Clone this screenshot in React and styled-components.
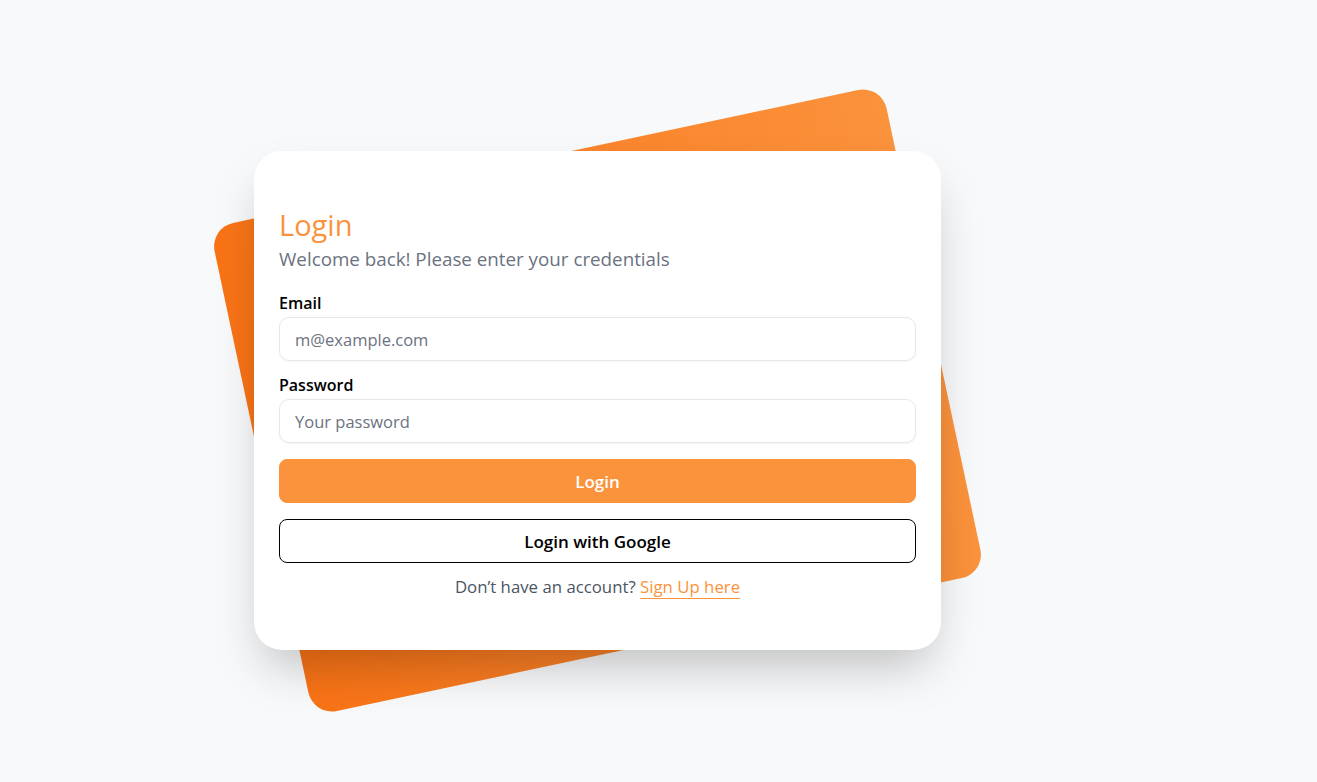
import React from 'react'
import styled, { createGlobalStyle } from 'styled-components'

const GlobalStyle = createGlobalStyle`
  html, body {
    margin: 0;
    padding: 0;
    background: #f8f9fa;
    font-family: "Open Sans", "Noto Sans", Arial, sans-serif;
  }
  * {
    box-sizing: border-box;
  }
`

const Page = styled.main`
  min-height: 100vh;
  padding: 151px 0 0 254px;
`

const Stack = styled.div`
  position: relative;
  width: 687px;
  height: 499px;
`

const BackCard = styled.div`
  position: absolute;
  inset: 0;
  border-radius: 24px;
  background: linear-gradient(to right, #f97316, #fb923c);
  transform: rotate(-12deg);
`

const Card = styled.section`
  position: relative;
  height: 100%;
  background: #fff;
  border-radius: 28px;
  box-shadow: 0 25px 50px -12px rgba(0, 0, 0, 0.25);
  padding: 56px 25px 40px;
  display: flex;
  flex-direction: column;
`

const Title = styled.h1`
  margin: 0;
  font-size: 29px;
  font-weight: 400;
  line-height: 36px;
  color: #fb923c;
`

const Subtitle = styled.p`
  margin: 2px 0 20px;
  font-size: 18.8px;
  line-height: 28px;
  color: #6b7280;
`

const Field = styled.div`
  display: flex;
  flex-direction: column;
  gap: 4px;
  margin-bottom: 14px;
`

const Label = styled.label`
  font-size: 16px;
  font-weight: 600;
  line-height: 20px;
  color: #000;
`

const Input = styled.input`
  height: 44px;
  padding: 0 15px;
  border: 1px solid #e5e7eb;
  border-radius: 10px;
  font: inherit;
  font-size: 16.5px;
  color: #111827;
  background: #fff;
  box-shadow: 0 1px 2px rgba(0, 0, 0, 0.04);
  outline: none;

  &::placeholder {
    color: #6b7280;
  }
`

const Button = styled.button`
  height: 44px;
  width: 100%;
  border-radius: 8px;
  font: inherit;
  font-size: 17px;
  font-weight: 600;
  cursor: pointer;
  border: 1px solid ${(p) => (p.$primary ? '#fb923c' : '#000')};
  background: ${(p) => (p.$primary ? '#fb923c' : '#fff')};
  color: ${(p) => (p.$primary ? '#fff' : '#000')};
  margin-top: ${(p) => (p.$primary ? '2px' : '16px')};
`

const Footer = styled.p`
  margin: 12px 0 0;
  text-align: center;
  font-size: 16.8px;
  line-height: 24px;
  color: #4b5563;
`

const SignUp = styled.a`
  color: #fb923c;
  text-decoration: none;
  border-bottom: 1px solid #fb923c;
`

export default function App() {
  return (
    <>
      <GlobalStyle />
      <Page>
        <Stack>
          <BackCard />
          <Card>
            <Title>Login</Title>
            <Subtitle>Welcome back! Please enter your credentials</Subtitle>
            <Field>
              <Label htmlFor="email">Email</Label>
              <Input id="email" type="email" placeholder="m@example.com" />
            </Field>
            <Field>
              <Label htmlFor="password">Password</Label>
              <Input id="password" type="password" placeholder="Your password" />
            </Field>
            <Button $primary>Login</Button>
            <Button>Login with Google</Button>
            <Footer>
              Don’t have an account? <SignUp href="#">Sign Up here</SignUp>
            </Footer>
          </Card>
        </Stack>
      </Page>
    </>
  )
}
